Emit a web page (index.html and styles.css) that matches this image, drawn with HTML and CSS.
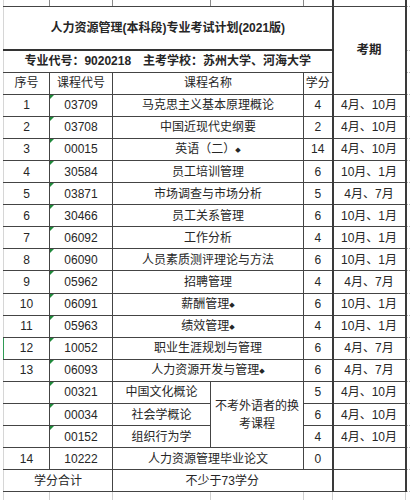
FILE: index.html
```html
<!DOCTYPE html>
<html lang="zh-CN">
<head>
<meta charset="utf-8">
<title>人力资源管理(本科段)专业考试计划(2021版)</title>
<link rel="stylesheet" href="styles.css">
</head>
<body>
<div class="sheet">
<table class="plan">
  <colgroup>
    <col class="c-no"><col class="c-code"><col class="c-name-a"><col class="c-name-b"><col class="c-credit"><col class="c-term"><col class="c-extra">
  </colgroup>
  <tr class="strip-top">
    <td class="first"></td><td></td><td></td><td></td><td></td><td class="term"></td><td class="extra"></td>
  </tr>
  <tr class="r-title">
    <td colspan="5" class="first title">人力资源管理(本科段)专业考试计划(2021版)</td>
    <td rowspan="3" class="term head-term">考期</td>
    <td class="extra"></td>
  </tr>
  <tr class="r-row">
    <td colspan="5" class="first info">专业代号：9020218<span class="gap"></span>主考学校：苏州大学、河海大学</td>
    <td class="extra"></td>
  </tr>
  <tr class="r-row">
    <td class="first">序号</td><td>课程代号</td><td colspan="2">课程名称</td><td class="credit-h">学分</td>
    <td class="extra"></td>
  </tr>
  <tr class="r-row"><td class="first">1</td><td class="code">03709</td><td colspan="2">马克思主义基本原理概论</td><td>4</td><td class="term">4月、10月</td><td class="extra"></td></tr>
  <tr class="r-row"><td class="first">2</td><td class="code">03708</td><td colspan="2">中国近现代史纲要</td><td>2</td><td class="term">4月、10月</td><td class="extra"></td></tr>
  <tr class="r-row"><td class="first">3</td><td class="code">00015</td><td colspan="2">英语（二）<span class="dia">◆</span></td><td>14</td><td class="term">4月、10月</td><td class="extra"></td></tr>
  <tr class="r-row"><td class="first">4</td><td class="code">30584</td><td colspan="2">员工培训管理</td><td>6</td><td class="term">10月、1月</td><td class="extra"></td></tr>
  <tr class="r-row"><td class="first">5</td><td class="code">03871</td><td colspan="2">市场调查与市场分析</td><td>5</td><td class="term">4月、7月</td><td class="extra"></td></tr>
  <tr class="r-row"><td class="first">6</td><td class="code">30466</td><td colspan="2">员工关系管理</td><td>6</td><td class="term">10月、1月</td><td class="extra"></td></tr>
  <tr class="r-row"><td class="first">7</td><td class="code">06092</td><td colspan="2">工作分析</td><td>4</td><td class="term">10月、1月</td><td class="extra"></td></tr>
  <tr class="r-row"><td class="first">8</td><td class="code">06090</td><td colspan="2">人员素质测评理论与方法</td><td>6</td><td class="term">10月、1月</td><td class="extra"></td></tr>
  <tr class="r-row"><td class="first">9</td><td class="code">05962</td><td colspan="2">招聘管理</td><td>4</td><td class="term">4月、7月</td><td class="extra"></td></tr>
  <tr class="r-row"><td class="first">10</td><td class="code">06091</td><td colspan="2">薪酬管理<span class="dia">◆</span></td><td>6</td><td class="term">10月、1月</td><td class="extra"></td></tr>
  <tr class="r-row"><td class="first">11</td><td class="code">05963</td><td colspan="2">绩效管理<span class="dia">◆</span></td><td>4</td><td class="term">10月、1月</td><td class="extra"></td></tr>
  <tr class="r-row"><td class="first selected">12</td><td class="code">10052</td><td colspan="2">职业生涯规划与管理</td><td>6</td><td class="term">4月、7月</td><td class="extra"></td></tr>
  <tr class="r-row"><td class="first">13</td><td class="code">06093</td><td colspan="2">人力资源开发与管理<span class="dia">◆</span></td><td>6</td><td class="term">4月、7月</td><td class="extra"></td></tr>
  <tr class="r-row"><td class="first"></td><td class="code">00321</td><td>中国文化概论</td><td rowspan="3" class="alt">不考外语者的换考课程</td><td>5</td><td class="term">4月、10月</td><td class="extra"></td></tr>
  <tr class="r-row"><td class="first"></td><td class="code">00034</td><td>社会学概论</td><td>6</td><td class="term">4月、10月</td><td class="extra"></td></tr>
  <tr class="r-row"><td class="first"></td><td class="code">00152</td><td>组织行为学</td><td>4</td><td class="term">4月、10月</td><td class="extra"></td></tr>
  <tr class="r-row"><td class="first">14</td><td>10222</td><td colspan="2">人力资源管理毕业论文</td><td>0</td><td class="term"></td><td class="extra"></td></tr>
  <tr class="r-row"><td colspan="2" class="first">学分合计</td><td colspan="3">不少于73学分</td><td class="term"></td><td class="extra"></td></tr>
  <tr class="strip-bottom">
    <td class="first"></td><td></td><td></td><td></td><td></td><td class="term"></td><td class="extra"></td>
  </tr>
</table>
</div>
</body>
</html>
```

FILE: styles.css
```css
html, body {
  margin: 0;
  padding: 0;
  background: #ffffff;
}
body {
  font-family: "Liberation Sans", "Noto Sans CJK SC", sans-serif;
  font-size: 12px;
  color: #262626;
  overflow: hidden;
}
.sheet {
  padding-left: 3px;
}
.plan {
  border-collapse: collapse;
  table-layout: fixed;
  width: 408px;
}
.c-no { width: 46px; }
.c-code { width: 63px; }
.c-name-a { width: 98px; }
.c-name-b { width: 93px; }
.c-credit { width: 29px; }
.c-term { width: 73px; }
.c-extra { width: 6px; }

.plan td {
  padding: 0;
  text-align: center;
  vertical-align: middle;
  border: 1px solid #444444;
  white-space: nowrap;
  line-height: 14px;
  overflow: hidden;
}
.plan td.first {
  border-left: 1px solid #d6d6d6;
}
.plan td.first.selected {
  border-left: 1px solid #2f9a55;
}
.plan td.term {
  border-left: 2px solid #3a3a3a;
  border-right: 2px solid #3a3a3a;
}
.plan td.extra {
  border-top: 1px dotted #b8b8b8;
  border-bottom: 1px dotted #b8b8b8;
  border-right: none;
}

.strip-top { height: 6px; }
.strip-top td {
  border-top: none;
  border-left-color: #8a8a8a;
  border-right: 1px solid #8a8a8a;
}
.strip-top td.extra { border-top: none; }

.r-title { height: 44px; }
.r-title td.title {
  font-weight: bold;
  border-bottom: 2px solid #333333;
}
.r-row { height: 22.1px; }

.info {
  font-weight: bold;
}
.gap {
  display: inline-block;
  width: 12px;
}
.head-term {
  font-weight: bold;
  font-size: 12.5px;
}
.credit-h {
  text-align: center;
}
.dia {
  font-size: 7px;
  vertical-align: 1px;
  font-family: "DejaVu Sans", sans-serif;
}
.plan td.code {
  position: relative;
}
.plan td.code::before {
  content: "";
  position: absolute;
  left: 0;
  top: 0;
  border-top: 4px solid #1f8a3b;
  border-right: 4px solid transparent;
}
.plan td.alt {
  white-space: normal;
  line-height: 18px;
}

.strip-bottom { height: 10px; }
.strip-bottom td {
  border-bottom: none;
  border-top-color: #444444;
  border-left: 1px solid #d0d0d0;
  border-right: 1px solid #d0d0d0;
}
.strip-bottom td.term {
  border-left: 1px solid #d0d0d0;
  border-right: 1px solid #d0d0d0;
}
```
